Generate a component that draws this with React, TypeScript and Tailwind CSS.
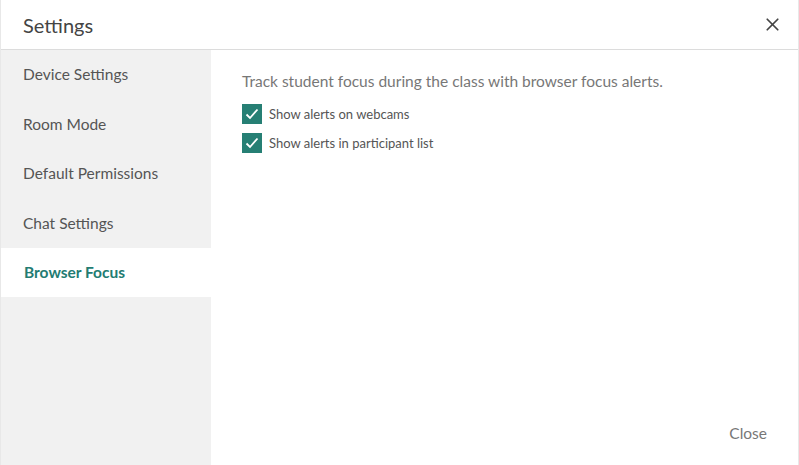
import { X } from "lucide-react";

const items = ["Device Settings", "Room Mode", "Default Permissions", "Chat Settings", "Browser Focus"];
const active = "Browser Focus";

function Check({ label }: { label: string }) {
  return (
    <label className="flex items-center gap-[7px] h-[20px]">
      <span className="w-[20px] h-[20px] bg-[#267f74] flex items-center justify-center">
        <svg width="16" height="16" viewBox="0 0 16 16" fill="none">
          <path d="M2.5 8.5 L6 12 L13.5 3.5" stroke="#fff" strokeWidth="1.8" />
        </svg>
      </span>
      <span className="text-[13px] text-[#555]">{label}</span>
    </label>
  );
}

export default function App() {
  return (
    <div
      className="w-[799px] h-[465px] bg-white flex flex-col border-l border-r border-[#e8e8e8] overflow-hidden"
      style={{ fontFamily: "Lato, 'Noto Sans', sans-serif" }}
    >
      <div className="h-[50px] flex items-center justify-between pl-[22px] pr-[15px] border-b border-[#dcdcdc] shrink-0">
        <h1 className="text-[20px] text-[#444]">Settings</h1>
        <X className="w-[21px] h-[21px] text-[#444]" strokeWidth={2} />
      </div>
      <div className="flex flex-1">
        <nav className="w-[210px] bg-[#f1f1f1] flex flex-col">
          {items.map((it) =>
            it === active ? (
              <div key={it} className="h-[49px] bg-white flex items-center pl-[23px] text-[15.5px] font-bold text-[#237c72]">
                {it}
              </div>
            ) : (
              <div key={it} className="h-[49.5px] flex items-center pl-[22px] text-[15.5px] text-[#555]">
                {it}
              </div>
            )
          )}
        </nav>
        <main className="flex-1 flex flex-col pl-[31px] pr-[30px] pt-[20px] pb-[20px]">
          <p className="text-[15.5px] text-[#777] mb-[11px]">
            Track student focus during the class with browser focus alerts.
          </p>
          <div className="flex flex-col gap-[9px]">
            <Check label="Show alerts on webcams" />
            <Check label="Show alerts in participant list" />
          </div>
          <div className="mt-auto flex justify-end">
            <button className="text-[15.5px] text-[#777] pr-[1px]">Close</button>
          </div>
        </main>
      </div>
    </div>
  );
}
